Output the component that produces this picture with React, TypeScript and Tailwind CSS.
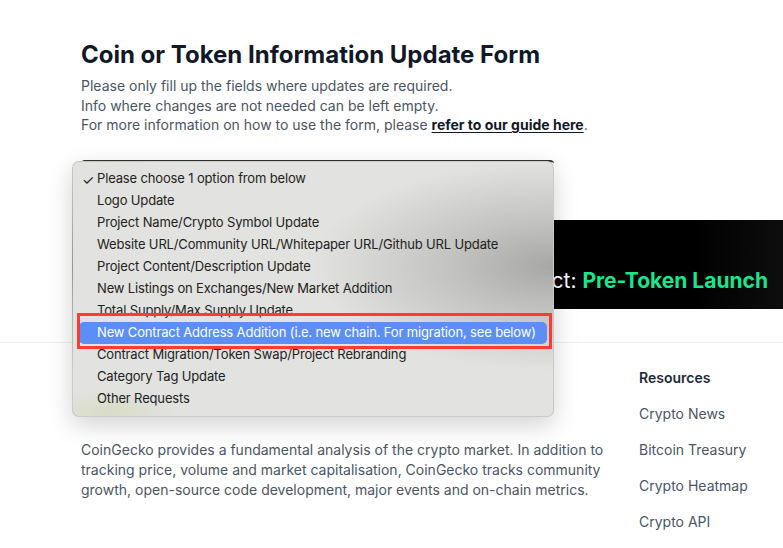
import React from 'react';

const options = [
  'Please choose 1 option from below',
  'Logo Update',
  'Project Name/Crypto Symbol Update',
  'Website URL/Community URL/Whitepaper URL/Github URL Update',
  'Project Content/Description Update',
  'New Listings on Exchanges/New Market Addition',
  'Total Supply/Max Supply Update',
  'New Contract Address Addition (i.e. new chain. For migration, see below)',
  'Contract Migration/Token Swap/Project Rebranding',
  'Category Tag Update',
  'Other Requests',
];

const resources = ['Crypto News', 'Bitcoin Treasury', 'Crypto Heatmap', 'Crypto API'];

const GeckoLogo = () => (
  <svg width="150" height="40" viewBox="0 0 150 40">
    <circle cx="20" cy="20" r="19" fill="#8dc63f" />
    <circle cx="20" cy="20" r="14" fill="#f9e988" />
    <circle cx="24" cy="15" r="4" fill="#ffffff" />
    <circle cx="25" cy="15" r="2" fill="#111827" />
    <rect x="46" y="12" width="96" height="16" rx="3" fill="#111827" opacity="0.85" />
  </svg>
);

export default function App() {
  const selected = 7;

  return (
    <div className="relative w-[783px] h-[548px] overflow-hidden bg-white font-['Inter','Liberation_Sans',sans-serif]">
      {/* form header */}
      <div className="px-[81px] pt-[39px]">
        <h1 className="text-[24px] leading-[32px] font-bold text-[#111827]">
          Coin or Token Information Update Form
        </h1>
        <p className="mt-[5px] text-[14px] leading-[19.5px] text-[#4b5563]">
          Please only fill up the fields where updates are required.
          <br />
          Info where changes are not needed can be left empty.
          <br />
          For more information on how to use the form, please{' '}
          <a className="font-bold text-[#111827] underline underline-offset-2">refer to our guide here</a>.
        </p>

        <div className="mt-[25px] h-[40px] w-[473px] rounded-t-[4px] border-t-2 border-[#333333]" />

        <div className="mt-[20px] -mr-[81px] ml-auto flex h-[89px] w-[363px] items-end justify-end bg-[linear-gradient(to_right,#000_75%,#0d0d0d)] pb-[14px] pr-[15px]">
          <span className="text-[21px] leading-[28px] text-white">
            Project: <span className="font-bold text-[#19e68f]">Pre-Token Launch</span>
          </span>
        </div>
      </div>

      {/* footer */}
      <div className="mt-[33px] border-t border-[#eceef1]">
        <div className="grid grid-cols-[558px_1fr] pl-[81px] pt-[25px]">
          <div>
            <div className="mt-[9px] h-[40px] mb-[23px]">
              <GeckoLogo />
            </div>
            <p className="w-[530px] text-[14px] leading-[20px] text-[#4b5563]">
              CoinGecko provides a fundamental analysis of the crypto market. In addition to tracking price, volume and
              market capitalisation, CoinGecko tracks community growth, open-source code development, major events and
              on-chain metrics.
            </p>
          </div>
          <div className="flex flex-col gap-[16px] whitespace-nowrap text-[14px] leading-[20px]">
            <div className="font-semibold text-[#1f2937]">Resources</div>
            {resources.map((r) => (
              <div key={r} className="text-[#4b5563]">
                {r}
              </div>
            ))}
          </div>
        </div>
      </div>

      {/* native select menu (blurred banner painted as gradient) */}
      <div className="absolute left-[72px] top-[161px] w-[482px] rounded-[7px] border border-black/10 bg-[#e2e2e0] bg-[radial-gradient(ellipse_240px_105px_at_100%_104px,#a7a7a5,#c4c4c2_45%,rgba(226,226,224,0)_100%),radial-gradient(ellipse_70px_22px_at_35px_250px,#d9dcc6,rgba(226,226,224,0))] py-[6px] shadow-[0_8px_24px_rgba(0,0,0,0.18)]">
        {options.map((o, i) => (
          <div
            key={o}
            className={
              i === selected
                ? 'mx-[6px] flex h-[22px] items-center rounded-[5px] bg-[#5b8ff6] pl-[18px] text-[13px] tracking-[-0.15px] text-white'
                : 'relative mx-[6px] flex h-[22px] items-center pl-[18px] text-[13px] tracking-[-0.15px] text-[#222222]'
            }
          >
            {i === 0 && <span className="absolute left-[3px] text-[14px]">✓</span>}
            {o}
          </div>
        ))}
      </div>

      {/* annotation */}
      <div className="absolute left-[77px] top-[313px] h-[36px] w-[475px] border-[3px] border-[#ff3b2f]" />
    </div>
  );
}
